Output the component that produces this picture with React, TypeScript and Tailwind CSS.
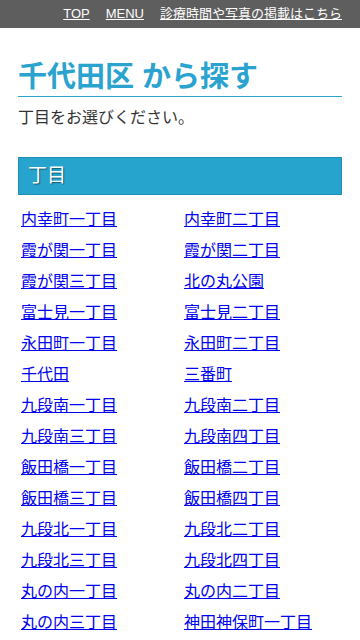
const rows: [string, string][] = [
  ['内幸町一丁目', '内幸町二丁目'],
  ['霞が関一丁目', '霞が関二丁目'],
  ['霞が関三丁目', '北の丸公園'],
  ['富士見一丁目', '富士見二丁目'],
  ['永田町一丁目', '永田町二丁目'],
  ['千代田', '三番町'],
  ['九段南一丁目', '九段南二丁目'],
  ['九段南三丁目', '九段南四丁目'],
  ['飯田橋一丁目', '飯田橋二丁目'],
  ['飯田橋三丁目', '飯田橋四丁目'],
  ['九段北一丁目', '九段北二丁目'],
  ['九段北三丁目', '九段北四丁目'],
  ['丸の内一丁目', '丸の内二丁目'],
  ['丸の内三丁目', '神田神保町一丁目'],
]

export default function App() {
  return (
    <div className="min-h-screen bg-white font-['Liberation_Sans','Noto_Sans_CJK_JP',sans-serif] text-[#333]">
      <header className="h-[28px] bg-[#5e5e5e] flex items-center justify-end pr-[18px] gap-4 text-[13px] text-white">
        <a href="#" className="underline">TOP</a>
        <a href="#" className="underline">MENU</a>
        <a href="#" className="underline">診療時間や写真の掲載はこちら</a>
      </header>
      <main className="px-[18px]">
        <h1 className="mt-[30px] border-b border-b-[#2ba3cf] text-[29px] leading-[38px] font-bold text-[#2ba3cf]">
          千代田区 から探す
        </h1>
        <p className="mt-[10px] text-[16px] leading-[22px]">丁目をお選びください。</p>
        <h2 className="mt-[28px] h-[38px] bg-[#27a4cd] border border-[#1f8fb5] flex items-center px-[9px] text-[19px] text-white [text-shadow:1px_1px_1px_rgba(0,0,0,0.45)]">
          丁目
        </h2>
        <ul className="mt-[9px] grid grid-cols-[163px_1fr] pl-[3px]">
          {rows.flat().map((name) => (
            <li key={name} className="h-[31px] flex items-center text-[16px]">
              <a href="#" className="text-[#0000ee] underline">{name}</a>
            </li>
          ))}
        </ul>
      </main>
    </div>
  )
}
